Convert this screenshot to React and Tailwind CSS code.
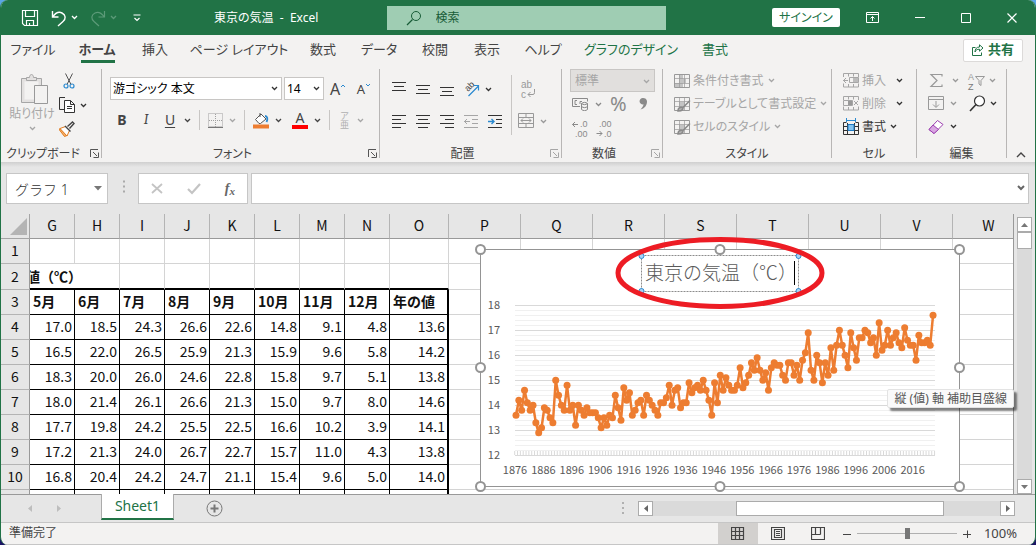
import { Fragment } from 'react';

const TABS = [
  { label: 'ファイル', width: 'w-16' },
  { label: 'ホーム', width: 'w-16', active: true },
  { label: '挿入', width: 'w-[52px]' },
  { label: 'ページ レイアウト', width: 'w-[116px]' },
  { label: '数式', width: 'w-[52px]' },
  { label: 'データ', width: 'w-[60px]' },
  { label: '校閲', width: 'w-[52px]' },
  { label: '表示', width: 'w-[52px]' },
  { label: 'ヘルプ', width: 'w-[60px]' },
  { label: 'グラフのデザイン', width: 'w-[116px]', context: true },
  { label: '書式', width: 'w-[52px]', context: true },
];

const COLUMNS = ['G', 'H', 'I', 'J', 'K', 'L', 'M', 'N', 'O', 'P', 'Q', 'R', 'S', 'T', 'U', 'V', 'W'];
const EMPTY = ['P', 'Q', 'R', 'S', 'T', 'U', 'V', 'W'];
const MONTHS = ['5月', '6月', '7月', '8月', '9月', '10月', '11月', '12月', '年の値'];

const ROWS = [
  ['17.0', '18.5', '24.3', '26.6', '22.6', '14.8', '9.1', '4.8', '13.6'],
  ['16.5', '22.0', '26.5', '25.9', '21.3', '15.9', '9.6', '5.8', '14.2'],
  ['18.3', '20.0', '26.0', '24.6', '22.8', '15.8', '9.7', '5.1', '13.8'],
  ['18.0', '21.4', '26.1', '26.6', '21.3', '15.0', '9.7', '8.0', '14.6'],
  ['17.7', '19.8', '24.2', '25.5', '22.5', '16.6', '10.2', '3.9', '14.1'],
  ['17.2', '21.3', '24.0', '26.7', '22.7', '15.7', '11.0', '4.3', '13.8'],
  ['16.8', '20.4', '24.2', '24.7', '21.1', '15.4', '9.6', '5.0', '14.0'],
];

// yearly mean temperature, 1876 - 2023
const TEMPS = [
  13.6, 14.2, 13.8, 14.6, 14.1, 13.8, 14.0, 13.3, 12.9, 13.1, 13.9, 13.8, 13.5, 13.3, 15.0, 14.4, 14.0, 13.8, 14.8, 13.8,
  14.0, 13.2, 14.0, 13.8, 13.6, 13.9, 13.7, 13.7, 13.7, 13.5, 13.1, 13.5, 13.2, 13.6, 13.5, 14.4, 13.9, 13.4, 14.7, 14.2,
  14.5, 13.6, 13.8, 14.1, 14.2, 13.6, 14.4, 14.2, 14.0, 13.8, 13.6, 14.1, 14.1, 14.3, 14.8, 14.0, 14.6, 14.7, 13.9, 14.1,
  14.1, 14.9, 14.5, 14.7, 14.8, 14.6, 15.0, 14.6, 14.2, 13.6, 14.9, 14.1, 15.2, 14.6, 15.1, 14.8, 14.6, 14.6, 14.8, 15.5,
  14.7, 14.9, 15.2, 15.7, 15.4, 15.9, 15.4, 15.0, 15.3, 14.6, 15.5, 15.7, 15.6, 15.6, 15.2, 15.0, 15.7, 15.7, 15.2, 15.6,
  15.0, 15.8, 16.1, 16.9, 15.4, 15.0, 16.0, 15.7, 14.9, 15.7, 15.2, 16.3, 15.4, 16.4, 17.0, 16.4, 16.0, 15.5, 16.9, 16.3,
  15.8, 16.7, 16.7, 17.0, 16.9, 16.5, 16.7, 16.0, 17.3, 16.2, 16.4, 17.0, 16.4, 16.7, 16.9, 16.5, 16.3, 17.1, 16.6, 16.4,
  16.4, 15.8, 16.8, 16.5, 16.5, 16.6, 16.4, 17.6,
];

const Icon = ({ w = 16, h = 16, className = '', children }) => (
  <svg width={w} height={h} viewBox={`0 0 ${w} ${h}`} fill="none" stroke="currentColor" className={`shrink-0 ${className}`} aria-hidden="true">
    {children}
  </svg>
);

const Chevron = ({ className = '' }) => (
  <Icon w={7} h={5} className={className}>
    <path d="M1 1l2.5 2.5L6 1" strokeWidth="1.3" />
  </Icon>
);

const Launcher = ({ className = 'text-[#555]' }) => (
  <button type="button" aria-label="詳細" className={`absolute right-0.5 bottom-0 ${className}`}>
    <Icon w={9} h={9}>
      <path d="M.5 8V.5H8M3 3l4 4M8.5 3.5v5h-5" />
    </Icon>
  </button>
);

const Tool = ({ label, className = '', children }) => (
  <button type="button" aria-label={label} className={`flex items-center justify-center shrink-0 ${className}`}>
    {children}
  </button>
);

const Group = ({ label, width, launcher, children }) => (
  <section aria-label={label} className={`relative shrink-0 h-[89px] flex flex-col border-r border-[#b8b6b5] ${width}`}>
    <div className="h-[76px] shrink-0">{children}</div>
    <div className={`h-[18px] shrink-0 leading-[18px] text-xs text-center text-[#444] ${launcher ? 'pr-4' : ''}`}>{label}</div>
    {launcher}
  </section>
);

const Lines = ({ rows, className = 'text-[#333]' }) => (
  <Icon w={14} h={14} className={className}>
    {rows.map(([x, y, w]) => <path key={y} d={`M${x} ${y + 0.5}h${w}`} />)}
  </Icon>
);

const TitleBar = () => (
  <header className="h-[35px] bg-[#217346] text-white flex items-center text-xs">
    <div className="mr-4 flex flex-1 min-w-0 items-center">
      <Tool label="上書き保存" className="ml-5">
        <Icon w={18} h={18}>
          <path d="M1.5 1.5h15v15h-13l-2-2zM4.5 1.5v6h9v-6M5.5 16.5v-5h7v5M8.5 16v-2" strokeWidth="1.2" />
        </Icon>
      </Tool>
      <Tool label="元に戻す" className="ml-3">
        <Icon w={16} h={18}>
          <path d="M1.500 2v6h6M2 7.500c3-4 6-5 9-3.500 4 2 4 6 1 8.500L7 17" strokeWidth="1.4" />
        </Icon>
      </Tool>
      <Chevron className="ml-1" />
      <Tool label="やり直し" className="ml-3 text-[#5c9a78]">
        <Icon w={16} h={18}>
          <path d="M14.500 2v6h-6M14 7.500c-3-4-6-5-9-3.500-4 2-4 6-1 8.500L9 17" strokeWidth="1.2" />
        </Icon>
      </Tool>
      <Chevron className="ml-1 text-[#5c9a78]" />
      <Tool label="クイック アクセス" className="ml-4">
        <Icon w={8} h={8}>
          <path d="M.5 1h7M1.500 4l2.500 2.500L6.500 4" strokeWidth="1.2" />
        </Icon>
      </Tool>
      <h1 className="ml-[73px] whitespace-pre">東京の気温  -  Excel</h1>
    </div>
    <label className="flex h-6 w-[279px] items-center bg-[#9fcdb3] pl-[19px] text-[#185c37]">
      <Icon w={16} h={16}>
        <circle cx="10" cy="6" r="4.500" />
        <path d="M6.500 9.500L1 15" strokeWidth="1.2" />
      </Icon>
      <input type="text" placeholder="検索" aria-label="検索" className="ml-[14px] w-40 bg-transparent outline-none placeholder:text-[#185c37]" />
    </label>
    <div className="flex flex-1 items-center justify-end">
      <button type="button" className="mr-[26px] h-[19px] w-[68px] rounded-xs bg-white leading-[19px] text-[#217346]">サインイン</button>
      <Tool label="リボンの表示オプション" className="mr-9">
        <Icon w={13} h={11}>
          <path d="M.5.500h12v10H.5zM.5 2.500h12M6.500 9V4.500M4.500 6.500l2-2 2 2" />
        </Icon>
      </Tool>
      <Tool label="最小化" className="mr-9"><Icon w={10} h={10}><path d="M0 4.500h10" /></Icon></Tool>
      <Tool label="最大化" className="mr-9"><Icon w={10} h={10}><path d="M.5.500h9v9h-9z" /></Icon></Tool>
      <Tool label="閉じる" className="mr-[18px]"><Icon w={10} h={10}><path d="M.5.500l9 9M9.500.500l-9 9" strokeWidth="1.2" /></Icon></Tool>
    </div>
  </header>
);

const TabStrip = () => (
  <nav className="flex h-[30px] items-center text-[13px] text-[#444]">
    {TABS.map(({ label, width, active, context }) => (
      <button
        key={label}
        type="button"
        className={`relative h-full shrink-0 whitespace-nowrap ${width} ${active ? 'font-bold' : ''} ${context ? 'text-[#217346]' : ''}`}
      >
        {label}
        {active && <span className="absolute bottom-0.5 left-4 h-[3px] w-[34px] bg-[#217346]" />}
      </button>
    ))}
    <div className="flex-1" />
    <button type="button" className="mr-3 flex h-[23px] w-[60px] items-center justify-center gap-1 rounded-xs border border-[#dcdad9] bg-white font-bold text-[#217346]">
      <Icon w={12} h={12}>
        <path d="M3.500 3.500h-3v8h9v-3M7.500.800L11 4 7.500 7.200V5.200C5 5.200 4 6 3 8c0-3 1.500-5 4.500-5z" />
      </Icon>
      共有
    </button>
  </nav>
);

const Clipboard = () => (
  <Group label="クリップボード" width="w-[101px]" launcher={<Launcher />}>
    <div className="flex">
      <button type="button" className="flex w-[62px] flex-col items-center pt-1 text-xs leading-5 text-[#a6a6a6]">
        <Icon w={28} h={31} className="ml-1">
          <path d="M1.500 5.500h20v24h-20z" fill="#e3e1e0" stroke="#a6a6a6" />
          <path d="M4.500 8.500h14v18h-14z" fill="#f3f2f1" stroke="none" />
          <path d="M6.500 7.500v-3h3c0-4 4-4 4 0h3v3z" fill="#e3e1e0" stroke="#a6a6a6" />
          <path d="M14.500 12.500h13v18h-13z" fill="#f3f2f1" stroke="#999" />
        </Icon>
        貼り付け
        <Chevron className="mt-0.5" />
      </button>
      <div className="flex flex-col">
        <Tool label="切り取り" className="h-6 w-3">
          <Icon w={12} h={16}>
            <path d="M2.500.500l5.500 11M9.500.500L4 11.500" stroke="#555" />
            <circle cx="3" cy="13" r="2" stroke="#2b8ad0" strokeWidth="1.2" />
            <circle cx="9" cy="13" r="2" stroke="#2b8ad0" strokeWidth="1.2" />
          </Icon>
        </Tool>
        <button type="button" aria-label="コピー" className="flex h-6 items-center text-[#333] -ml-1">
          <Icon w={17} h={16}>
            <path d="M5 12.500H.500V.500H6" />
            <path d="M5.500 3.500h6l4 4v8h-10zM11.500 3.500v4h4M8 9.500h5M8 11.500h5" fill="#fff" />
          </Icon>
          <Chevron className="ml-1" />
        </button>
        <Tool label="書式のコピー" className="h-6 w-4 -ml-1">
          <Icon w={16} h={16}>
            <path d="M1 7.500l7 7-2.500 1L.5 9z" fill="#f6b26b" stroke="#e07b1f" />
            <path d="M1 7.500l5.500-2 4 4L8 15z" fill="#fff" stroke="#e07b1f" />
            <path d="M6 5l5.500 5.500M8.500 5.500L13.500 1 15 2.500 10.500 7.500" stroke="#444" strokeWidth="1.4" />
          </Icon>
        </Tool>
      </div>
    </div>
  </Group>
);

const VLine = ({ className = 'h-5' }) => <span className={`w-px shrink-0 bg-[#c8c6c4] ${className}`} />;

const FontGroup = () => (
  <Group label="フォント" width="w-[278px]" launcher={<Launcher />}>
    <div className="flex h-[31px] items-center gap-0.5 pt-2 pl-2">
      <div className="relative flex">
        <select aria-label="フォント名" className="h-[23px] w-[172px] appearance-none border border-[#c8c6c4] bg-white pl-0.5 text-xs text-black">
          <option>游ゴシック 本文</option>
        </select>
        <Chevron className="pointer-events-none absolute right-1 top-[9px] text-[#333]" />
      </div>
      <div className="relative flex">
        <select aria-label="フォント サイズ" className="h-[23px] w-10 appearance-none border border-[#c8c6c4] bg-white pl-0.5 text-xs text-black">
          <option>14</option>
        </select>
        <Chevron className="pointer-events-none absolute right-1 top-[9px] text-[#333]" />
      </div>
      <Tool label="フォント サイズの拡大" className="w-6 text-base leading-5 text-[#444]">
        A<Icon w={6} h={12}><path d="M1 4l2-2 2 2" stroke="#2b8ad0" /></Icon>
      </Tool>
      <Tool label="フォント サイズの縮小" className="w-6 text-[13px] leading-5 text-[#444]">
        A<Icon w={6} h={12}><path d="M1 1l2 2 2-2" stroke="#2b8ad0" /></Icon>
      </Tool>
    </div>
    <div className="mt-2 flex h-6 items-center pl-2 text-[#444]">
      <Tool label="太字" className="w-6 text-sm font-bold">B</Tool>
      <Tool label="斜体" className="w-6 font-serif text-sm italic">I</Tool>
      <Tool label="下線" className="w-6 text-sm underline underline-offset-2">U</Tool>
      <Chevron className="ml-0.5" />
      <VLine className="ml-2 h-5" />
      <Tool label="罫線" className="ml-2 text-[#a0a0a0]">
        <Icon w={15} h={15}>
          <path d="M.5.500h14v13H.5zM7.500 1v13M1 7.500h13" strokeDasharray="1 1" />
          <path d="M0 14.500h15" stroke="#777" />
        </Icon>
      </Tool>
      <Chevron className="ml-1.5 text-[#a6a6a6]" />
      <VLine className="ml-2 h-5" />
      <Tool label="塗りつぶしの色" className="ml-2">
        <Icon w={16} h={17}>
          <path d="M2.500 7.500L8 2l5 5-5.500 4.500H6zM7 1v4" fill="#fff" stroke="#555" />
          <path d="M12 4c2.500 0 3 3 1.500 6" stroke="#2b8ad0" strokeWidth="1.800" />
          <path d="M0 14.500h16" stroke="#ed7d31" strokeWidth="4" />
        </Icon>
      </Tool>
      <Chevron className="ml-1.5" />
      <Tool label="フォントの色" className="ml-2.5 h-[18px] w-4 border-b-4 border-[#f00] text-sm leading-none">A</Tool>
      <Chevron className="ml-1.5" />
      <VLine className="ml-2 h-5" />
      <Tool label="ふりがな" className="ml-2.5 flex-col text-[9px] leading-[9px] text-[#b0b0b0]">
        <span>ア</span>
        <span>亜</span>
      </Tool>
      <Chevron className="ml-2 text-[#a6a6a6]" />
    </div>
  </Group>
);

const Alignment = () => (
  <Group label="配置" width="w-[182px]" launcher={<Launcher className="text-[#a6a6a6]" />}>
    <div className="flex pl-[7px]">
      <div className="pt-2">
        <div className="flex h-6 items-center">
          <Tool label="上揃え" className="w-6"><Lines rows={[[0, 0, 14], [2, 4, 10], [0, 8, 14]]} /></Tool>
          <Tool label="上下中央揃え" className="w-6"><Lines rows={[[0, 3, 14], [2, 7, 10], [0, 11, 14]]} /></Tool>
          <Tool label="下揃え" className="w-6"><Lines rows={[[0, 5, 14], [2, 9, 10], [0, 13, 14]]} /></Tool>
          <Tool label="方向" className="w-6">
            <Icon w={18} h={20}>
              <text x="0" y="0" transform="translate(6 13) rotate(-45)" fontSize="9" fill="#444" stroke="none" className="font-['Liberation_Sans',sans-serif]">ab</text>
              <path d="M6.500 17L16.500 7M11.500 6.500h5v5" stroke="#2b8ad0" strokeWidth="1.2" />
            </Icon>
          </Tool>
          <Chevron className="ml-0.5 text-[#333]" />
        </div>
        <div className="mt-2 flex h-6 items-center">
          <Tool label="左揃え" className="w-6"><Lines rows={[[0, 1, 14], [0, 5, 9], [0, 9, 14], [0, 13, 9]]} /></Tool>
          <Tool label="中央揃え" className="w-6"><Lines rows={[[0, 1, 14], [2, 5, 10], [0, 9, 14], [2, 13, 10]]} /></Tool>
          <Tool label="右揃え" className="w-6"><Lines rows={[[0, 1, 14], [5, 5, 9], [0, 9, 14], [5, 13, 9]]} /></Tool>
          <Tool label="インデントを減らす" className="w-6 text-[#a6a6a6]">
            <Icon w={14} h={14}><path d="M0 1.500h14M8 5.500h6M8 9.500h6M0 13.500h14M0 7.500h6M3 5L.5 7.500 3 10" /></Icon>
          </Tool>
          <Tool label="インデントを増やす" className="w-6 text-[#333]">
            <Icon w={14} h={14}>
              <path d="M0 1.500h14M8 5.500h6M8 9.500h6M0 13.500h14" />
              <path d="M0 7.500h6M3.500 5L6 7.500 3.500 10" stroke="#2b8ad0" strokeWidth="1.400" />
            </Icon>
          </Tool>
        </div>
      </div>
      <VLine className="mt-1.5 ml-1 h-[60px]" />
      <div className="pt-2 pl-1.5 text-[#999]">
        <Tool label="折り返して全体を表示する" className="h-6">
          <Icon w={20} h={22}>
            <g fill="currentColor" stroke="none" fontSize="10" className="font-['Liberation_Sans',sans-serif]">
              <text x="3" y="10">ab</text>
              <text x="3" y="20">c</text>
            </g>
            <path d="M16.500 11v3.500q0 2-1.500 2H10M12.500 14L10 16.500l2.500 2.500" />
          </Icon>
        </Tool>
        <div className="mt-2 flex h-6 items-center">
          <Tool label="セルを結合して中央揃え">
            <Icon w={16} h={16}>
              <path d="M.5.500h15v14H.5zM.5 4.500h15M.5 10.500h15M8 .5v4M8 10.500v4" />
              <path d="M3 7.500h10M5 5.500l-2 2 2 2M11 5.500l2 2-2 2" />
            </Icon>
          </Tool>
          <Chevron className="ml-1.5" />
        </div>
      </div>
    </div>
  </Group>
);

const NumberGroup = () => (
  <Group label="数値" width="w-[101px]" launcher={<Launcher className="text-[#a6a6a6]" />}>
    <div className="relative flex pl-2">
      <select disabled aria-label="表示形式" className="h-[23px] w-[85px] appearance-none border border-[#c8c6c4] bg-[#e1dfdd] pl-1 text-xs text-[#a6a6a6] opacity-100">
        <option>標準</option>
      </select>
      <Chevron className="pointer-events-none absolute right-3 top-2.5 text-[#a6a6a6]" />
    </div>
    <div className="flex h-6 items-center pl-2.5 text-[#8a8a8a]">
      <Tool label="通貨表示形式">
        <Icon w={17} h={14}>
          <path d="M8 9.500H.500v-8h15v3M5 3.500H3v4h2M8 7V4.500h2" />
          <path d="M9.500 6.500v6c2 1.500 4 1.500 6 0v-6c-2-1.500-4-1.500-6 0c2 1.500 4 1.500 6 0M9.500 9.500c2 1.500 4 1.500 6 0" fill="#f3f2f1" />
        </Icon>
      </Tool>
      <Chevron className="ml-1.5" />
      <Tool label="パーセント" className="ml-2 text-xl leading-6">%</Tool>
      <Tool label="桁区切り" className="ml-3">
        <Icon w={9} h={14}>
          <path d="M4 1a3.200 3.200 0 1 0 .5 6.300C4.300 9.500 3 11 1.500 12.500c4-1 6.500-4 6.500-8C8 2 6 1 4 1z" fill="currentColor" stroke="none" />
        </Icon>
      </Tool>
    </div>
    <div className="flex h-6 items-center gap-1.5 pl-2.5 text-[#8a8a8a]">
      <Tool label="小数点以下の表示桁数を増やす">
        <Icon w={18} h={22}>
          <path d="M.500 7.500H6M3 5L.5 7.500 3 10" />
          <g fill="currentColor" stroke="none" fontSize="9" className="font-['Liberation_Sans',sans-serif]">
            <text x="8" y="10">.0</text>
            <text x="3" y="20">.00</text>
          </g>
        </Icon>
      </Tool>
      <Tool label="小数点以下の表示桁数を減らす">
        <Icon w={18} h={22}>
          <path d="M.500 16.500H6M3.500 14L6 16.500 3.500 19" />
          <g fill="currentColor" stroke="none" fontSize="9" className="font-['Liberation_Sans',sans-serif]">
            <text x="3" y="10">.00</text>
            <text x="8" y="20">.0</text>
          </g>
        </Icon>
      </Tool>
    </div>
  </Group>
);

const RowButton = ({ icon, label, className = 'text-[#a6a6a6]', chevron = '' }) => (
  <button type="button" className={`flex h-[23px] items-center whitespace-nowrap text-xs ${className}`}>
    {icon}
    <span className="ml-0.5">{label}</span>
    <Chevron className={`ml-1 ${chevron}`} />
  </button>
);

const TableIcon = ({ brush }) => (
  <Icon w={17} h={16} className="text-[#999]">
    <path d="M.5 1.500h15v13H.5z" fill="#f3f2f1" />
    <path d={brush ? 'M5 6h6v5H5z' : 'M5 2h4v4H5zM5 6h7v4H5zM1 10h8v4H1z'} fill="#c4c4c4" stroke="none" />
    <path d="M.5 5.500h15M.5 10.500h15M5.500 1.500v13M10.500 1.500v13" strokeWidth=".7" />
    {brush && <path d="M16 4.500l-7 7M4 15c0-3 2-4 4-3.500S9 15 4 15z" fill="#b5b5b5" stroke="#8a8a8a" strokeWidth="1.600" />}
  </Icon>
);

const StyleGroup = () => (
  <Group label="スタイル" width="w-[169px]">
    <div className="flex flex-col items-start pl-[11px]">
      <RowButton icon={<TableIcon />} label="条件付き書式" />
      <RowButton icon={<TableIcon brush />} label="テーブルとして書式設定" />
      <RowButton icon={<TableIcon brush />} label="セルのスタイル" />
    </div>
  </Group>
);

const CellGroup = () => (
  <Group label="セル" width="w-[85px]">
    <div className="flex flex-col items-start pl-[11px]">
      <RowButton
        icon={(
          <Icon w={17} h={15}>
            <path d="M.5 4V.500h15v3.500M.5 10.500v3.500h15v-3.500M5.500.500v3M10.500.500v3M5.500 11v3M10.500 11v3M6.500 4.500h9v5h-9zM0 7.500h5M3 5L.5 7.500 3 10" />
            <path d="M10 5h5v4h-5z" fill="#bbb" stroke="none" />
          </Icon>
        )}
        label="挿入"
        chevron="ml-2.5 text-[#333]"
      />
      <RowButton
        icon={(
          <Icon w={17} h={15}>
            <path d="M.5 4V.500h15v3.500M.5 10.500v3.500h15v-3.500M5.500.500v3M10.500.500v3M5.500 11v3M10.500 11v3M.5 4.500h9v5h-9z" />
            <path d="M5 5h4v4H5z" fill="#999" stroke="none" />
            <path d="M11 5l4 4M15 5l-4 4" />
          </Icon>
        )}
        label="削除"
        chevron="ml-2.5 text-[#333]"
      />
      <RowButton
        icon={(
          <Icon w={17} h={17}>
            <path d="M3.500 4.500h-3v12h15v-12h-3M.5 8.500h15M.5 12.500h15M4.500 5v11M11.500 5v11" stroke="#333" />
            <path d="M5 6.500h6v6H5z" fill="#83c3f0" stroke="#1e7bc4" />
            <path d="M3.500 0v4M12.500 0v4M4 2.500h8" stroke="#2b8ad0" />
          </Icon>
        )}
        label="書式"
        className="text-[#333]"
      />
    </div>
  </Group>
);

const EditGroup = () => (
  <Group label="編集" width="w-[90px]">
    <div className="flex h-[23px] items-center pl-3 text-[#999]">
      <Tool label="合計">
        <Icon w={15} h={15}><path d="M13 3.500V1.500H2l6 6-6 6h11v-2" strokeWidth="1.2" /></Icon>
      </Tool>
      <Chevron className="ml-2" />
      <Tool label="並べ替えとフィルター" className="ml-2">
        <Icon w={18} h={20}>
          <g stroke="none" fontSize="9" className="font-['Liberation_Sans',sans-serif]">
            <text x="1" y="9" fill="currentColor">A</text>
            <text x="1" y="19" fill="#777">Z</text>
          </g>
          <path d="M8.500 5.500h9l-3.500 4v5l-2-1.500V9.500z" />
        </Icon>
      </Tool>
      <Chevron className="ml-1" />
    </div>
    <div className="flex h-[23px] items-center pl-[11px] text-[#999]">
      <Tool label="フィル">
        <Icon w={16} h={15}><path d="M.5.500h15v13H.5zM.5 3.500h15M8 5v6M5 8.500l3 3 3-3" /></Icon>
      </Tool>
      <Chevron className="ml-1.5" />
      <Tool label="検索と選択" className="ml-3 text-[#333]">
        <Icon w={17} h={17}>
          <circle cx="10.500" cy="6" r="5" fill="#fff" strokeWidth="1.2" />
          <path d="M7 9.500L1 16" strokeWidth="1.600" />
        </Icon>
      </Tool>
      <Chevron className="ml-1 text-[#333]" />
    </div>
    <div className="flex h-[23px] items-center pl-[11px] text-[#333]">
      <Tool label="クリア">
        <Icon w={16} h={16}>
          <path d="M1 10.500L9.500 1.500l5.500 4-9 9z" fill="#fff" stroke="#9b3fb0" />
          <path d="M1 10.500L5 6l5.500 4.500L6 14.500z" fill="#d9a6e2" stroke="#9b3fb0" />
        </Icon>
      </Tool>
      <Chevron className="ml-1.5" />
    </div>
  </Group>
);

const Ribbon = () => (
  <div className="flex h-[97px] pt-1">
    <Clipboard />
    <FontGroup />
    <Alignment />
    <NumberGroup />
    <StyleGroup />
    <CellGroup />
    <EditGroup />
    <div className="flex flex-1 items-end justify-center pb-1 text-[#444]">
      <Tool label="リボンを折りたたむ"><Icon w={10} h={6}><path d="M1 5l4-4 4 4" strokeWidth="1.400" /></Icon></Tool>
    </div>
  </div>
);

const FormulaBar = () => (
  <div className="h-[52px] bg-[#e6e6e6]">
    <div className="h-[5px] bg-gradient-to-b from-[#cfcfcf] to-[#e6e6e6]" />
    <div className="mt-1.5 flex h-[31px] items-stretch pr-1.5 pl-[5px]">
      <div className="relative">
        <input aria-label="名前ボックス" defaultValue="グラフ 1" className="h-full w-[102px] border border-[#c6c6c6] bg-white pl-2 text-sm font-light text-[#333] outline-none [font-feature-settings:normal]" />
        <Icon w={8} h={5} className="absolute right-1.5 top-[13px]"><path d="M0 0h8L4 4.500z" fill="#777" stroke="none" /></Icon>
      </div>
      <Icon w={30} h={31} className="text-[#aaa]"><path d="M15 8.500h2M15 13.500h2M15 18.500h2" strokeWidth="2" /></Icon>
      <div className="flex w-[110px] items-center justify-around border border-[#c6c6c6] bg-white text-[#c4c4c4]">
        <Tool label="キャンセル"><Icon w={12} h={12}><path d="M1 1l10 9M11 1L1 10" strokeWidth="1.800" /></Icon></Tool>
        <Tool label="入力"><Icon w={14} h={12}><path d="M1 6l4 4L13 1" strokeWidth="2.200" /></Icon></Tool>
        <Tool label="関数の挿入" className="font-['Liberation_Serif'] text-sm leading-4 font-bold italic text-[#666]">f<span className="mt-1 text-[11px] leading-3">x</span></Tool>
      </div>
      <div className="relative ml-[3px] flex-1">
        <input aria-label="数式バー" className="h-full w-full border border-[#c6c6c6] bg-white outline-none" />
        <Icon w={8} h={6} className="absolute right-1 top-3 text-[#666]"><path d="M1 1l3 3 3-3" strokeWidth="2" /></Icon>
      </div>
    </div>
  </div>
);

const px = (i) => 40 + i * 2.837;
const py = (t) => 56.3 + (18 - t) * 25;

const Chart = () => (
  <div className="absolute top-[35px] left-[479px] h-[239px] w-[480px]">
    <svg width="480" height="239" viewBox="4 0 480 239" className="absolute inset-0 overflow-visible" role="img" aria-label="東京の気温">
      <rect x="4.500" y=".5" width="479" height="237" fill="#fff" stroke="#949494" />
      <g shapeRendering="crispEdges">
        {Array.from({ length: 31 }, (_, i) => (
          <path key={i} d={`M39 ${56.5 + i * 5}h420`} stroke={i % 5 ? '#f0f0f0' : '#d9d9d9'} />
        ))}
      </g>
      {Array.from({ length: 149 }, (_, i) => (
        <path key={i} d={`M${38.7 + i * 2.837} 202v4`} stroke="#d9d9d9" />
      ))}
      <g fontSize="11" fill="#595959">
        {[18, 17, 16, 15, 14, 13, 12].map((v, i) => (
          <text key={v} x="24" y={60 + i * 25} textAnchor="end">{v}</text>
        ))}
        {Array.from({ length: 15 }, (_, i) => (
          <text key={i} x={39 + i * 28.4} y="225" textAnchor="middle">{1876 + i * 10}</text>
        ))}
      </g>
      <polyline points={TEMPS.map((t, i) => `${px(i)},${py(t)}`).join(' ')} fill="none" stroke="#ed7d31" strokeWidth="2.500" strokeLinejoin="round" />
      {TEMPS.map((t, i) => <circle key={i} cx={px(i)} cy={py(t)} r="3.500" fill="#ed7d31" />)}
      <g fill="#fff" stroke="#949494" strokeWidth="2">
        {[[4.5, 0.5], [244, 0.5], [483.5, 0.5], [4.5, 118.5], [483.5, 118.5], [4.5, 237.5], [244, 237.5], [483.5, 237.5]].map(([x, y]) => (
          <circle key={`${x}-${y}`} cx={x} cy={y} r="4.500" />
        ))}
      </g>
      <path d="M165.500 6.500h157v36h-157z" fill="none" stroke="#8c8c8c" strokeDasharray="2 1" />
      <g fill="#a9d3f5" stroke="#2b8ad0">
        {[[165.5, 7], [322.5, 7], [165.5, 42], [322.5, 42]].map(([x, y]) => (
          <circle key={`${x}-${y}`} cx={x} cy={y} r="2.500" />
        ))}
      </g>
      <ellipse cx="244" cy="24" rx="102" ry="33.500" fill="none" stroke="#ed1c24" strokeWidth="5" />
    </svg>
    <input
      aria-label="グラフ タイトル"
      defaultValue="東京の気温（℃）"
      className="absolute top-1.5 left-[165px] h-8 w-[156px] bg-transparent font-['Noto_Sans_CJK_JP',sans-serif] text-[19px] font-light text-[#595959] outline-none [font-feature-settings:normal]"
    />
    <span className="absolute top-3 left-[314px] h-6 w-px bg-black" />
  </div>
);

const Sheet = () => (
  <div className="flex h-[280px] bg-[#e6e6e6]">
    <div className="relative min-w-0 flex-1 overflow-hidden border-r border-[#999] font-['Noto_Sans_CJK_JP',sans-serif]">
      <table className="w-[1024px] table-fixed border-separate border-spacing-0 bg-white text-sm leading-5 text-[#111] [font-feature-settings:normal]">
        <colgroup>
          <col className="w-[29px]" />
          {MONTHS.map((m) => <col key={m} className={m === '年の値' ? 'w-[59px]' : 'w-[45px]'} />)}
          {EMPTY.map((c) => <col key={c} className="w-[72px]" />)}
        </colgroup>
        <thead>
          <tr className="h-[25px] bg-[#e6e6e6]">
            <td className="border-r border-b border-[#a5a5a5] p-0">
              <Icon w={17} h={17} className="ml-auto mr-0.5"><path d="M17 0v17H0z" fill="#b4b4b4" stroke="none" /></Icon>
            </td>
            {COLUMNS.map((c) => <th key={c} scope="col" className="border-r border-b border-r-[#b4b4b4] border-b-[#999] p-0 pb-0.5 font-normal">{c}</th>)}
          </tr>
        </thead>
        <tbody>
          <tr className="h-[25px]">
            <RowHead n={1} />
            {COLUMNS.map((c) => <td key={c} className="border-r border-b border-[#d4d4d4] p-0" />)}
          </tr>
          <tr className="h-[26px]">
            <RowHead n={2} />
            <td colSpan={2} className="border-r border-b-2 border-r-[#d4d4d4] border-b-black p-0 font-bold whitespace-nowrap">
              <div className="overflow-hidden -indent-1">値（℃）</div>
            </td>
            {MONTHS.slice(2).map((m) => <td key={m} className="border-r border-b-2 border-r-[#d4d4d4] border-b-black p-0" />)}
            <EmptyCells />
          </tr>
          <tr className="h-[25px]">
            <RowHead n={3} />
            {MONTHS.map((m) => (
              <th key={m} scope="col" className="border-r border-b border-black p-0 pb-0.5 pl-[3px] text-left font-bold whitespace-nowrap last-of-type:border-r-2">{m}</th>
            ))}
            <EmptyCells />
          </tr>
          {ROWS.map((row, r) => (
            <tr key={r} className="h-[25px]">
              <RowHead n={r + 4} />
              {row.map((v, i) => (
                <td key={i} className={`border-b border-black p-0 pr-0.5 pb-0.5 text-right font-normal ${i === 8 ? 'border-r-2' : 'border-r'}`}>{v}</td>
              ))}
              <EmptyCells />
            </tr>
          ))}
          <tr className="h-[25px]">
            <RowHead n="" />
            {MONTHS.map((m, i) => <td key={m} className={`border-b border-black p-0 ${i === 8 ? 'border-r-2' : 'border-r'}`} />)}
            <EmptyCells />
          </tr>
        </tbody>
      </table>
      <Chart />
    </div>
    <div className="flex w-[21px] flex-col pt-[3px] pl-[3px] text-[#777]">
      <div className="flex w-[15px] flex-1 flex-col bg-[#dadada]">
        <Tool label="上へスクロール" className="h-[15px] border border-[#ababab] bg-white"><Icon w={7} h={4}><path d="M0 4h7L3.500 0z" fill="currentColor" stroke="none" /></Icon></Tool>
        <div className="h-[17px] border border-[#ababab] bg-white" />
        <div className="flex-1" />
        <Tool label="下へスクロール" className="h-[15px] border border-[#ababab] bg-white"><Icon w={7} h={4}><path d="M0 0h7L3.500 4z" fill="currentColor" stroke="none" /></Icon></Tool>
      </div>
    </div>
    <div role="tooltip" className="absolute top-[389px] right-[21px] h-[19px] rounded-xs border border-[#e3e3e3] bg-[#fafafa] px-1.5 text-xs leading-[17px] whitespace-nowrap text-[#575757] shadow-[3px_3px_2px_rgba(0,0,0,0.5)]">
      縦 (値) 軸 補助目盛線
    </div>
  </div>
);

const RowHead = ({ n }) => (
  <th scope="row" className="border-r border-b border-r-[#999] border-b-[#b4b4b4] bg-[#e6e6e6] p-0 pb-0.5 font-normal">{n}</th>
);

const EmptyCells = () => EMPTY.map((c) => <td key={c} className="border-b border-[#d4d4d4] p-0" />);

const SheetTabs = () => (
  <div className="flex h-7 items-start border-t border-[#999] bg-[#e6e6e6]">
    <div className="flex w-[100px] items-center gap-[25px] pt-2.5 pl-[27px] text-[#bdbdbd]">
      <Icon w={4} h={7}><path d="M4 0v7L0 3.500z" fill="currentColor" stroke="none" /></Icon>
      <Icon w={4} h={7}><path d="M0 0v7l4-3.500z" fill="currentColor" stroke="none" /></Icon>
    </div>
    <button type="button" className="-mt-px h-[26px] w-[73px] border-x border-b-2 border-x-[#ababab] border-b-[#217346] bg-white text-sm leading-6 text-[#217346]">Sheet1</button>
    <Tool label="新しいシート" className="mt-[5px] ml-8 text-[#777]">
      <Icon w={17} h={17}>
        <circle cx="8.500" cy="8.500" r="7.500" />
        <path d="M4.500 8.500h8M8.500 4.500v8" strokeWidth="2" />
      </Icon>
    </Tool>
    <div className="flex-1" />
    <Icon w={16} h={26} className="text-[#b0b0b0]"><path d="M0 8h2M0 13h2M0 18h2" strokeWidth="2" /></Icon>
    <div className="mt-1.5 mr-5 flex h-[15px] w-[377px] bg-[#dadada] text-[#666]">
      <Tool label="左へスクロール" className="w-[15px] border border-[#ababab] bg-white"><Icon w={4} h={7}><path d="M4 0v7L0 3.500z" fill="currentColor" stroke="none" /></Icon></Tool>
      <div className="ml-[83px] w-[208px] border border-[#ababab] bg-white" />
      <div className="flex-1" />
      <Tool label="右へスクロール" className="w-[15px] border border-[#ababab] bg-white"><Icon w={4} h={7}><path d="M0 0v7l4-3.500z" fill="currentColor" stroke="none" /></Icon></Tool>
    </div>
  </div>
);

const StatusBar = () => (
  <footer className="flex h-[23px] items-stretch border-y border-[#c6c6c6] text-xs leading-5 text-[#444]">
    <span className="pl-2">準備完了</span>
    <div className="flex-1" />
    <Tool label="標準" className="w-10 bg-[#d2d0ce]">
      <Icon w={14} h={14}><path d="M.5.500h12v12H.5zM4.500.500v12M8.500.500v12M.5 4.500h12M.5 8.500h12" strokeWidth="1.200" /></Icon>
    </Tool>
    <Tool label="ページ レイアウト" className="w-10">
      <Icon w={14} h={14}><path d="M.5.500h13v12H.5zM3.500 2.500h7v8h-7zM5 4.500h4M5 6.500h4M5 8.500h4" strokeWidth="1.200" /></Icon>
    </Tool>
    <Tool label="改ページ プレビュー" className="w-10">
      <Icon w={14} h={14}><path d="M.5.500h13v12H.5zM4.500.500v7M9.500.500v7M.5 7.500h9" strokeWidth="1.200" /></Icon>
    </Tool>
    <Tool label="縮小" className="ml-[5px]"><Icon w={8} h={8}><path d="M0 4.500h8" /></Icon></Tool>
    <input
      type="range"
      aria-label="ズーム"
      min="0"
      max="100"
      defaultValue="50"
      className="mx-[6px] w-[100px] appearance-none bg-transparent [&::-webkit-slider-runnable-track]:h-px [&::-webkit-slider-runnable-track]:bg-[#b0b0b0] [&::-webkit-slider-thumb]:-mt-[5px] [&::-webkit-slider-thumb]:h-[11px] [&::-webkit-slider-thumb]:w-[5px] [&::-webkit-slider-thumb]:appearance-none [&::-webkit-slider-thumb]:bg-[#777]"
    />
    <Tool label="拡大"><Icon w={8} h={8}><path d="M0 4.500h8M4.500.500v8" /></Icon></Tool>
    <span className="w-16 pr-[18px] text-right text-[13px]">100%</span>
  </footer>
);

export default function App() {
  return (
    <div className="bg-gradient-to-b from-[#5aa7e6] to-[#1b1464] font-['Noto_Sans','Noto_Sans_CJK_JP',sans-serif] [font-feature-settings:'palt']">
      <div className="relative flex flex-col overflow-hidden rounded-lg border-x border-[#217346] bg-[#f3f2f1]">
        {[TitleBar, TabStrip, Ribbon, FormulaBar, Sheet, SheetTabs, StatusBar].map((Part, i) => (
          <Fragment key={i}><Part /></Fragment>
        ))}
      </div>
    </div>
  );
}
